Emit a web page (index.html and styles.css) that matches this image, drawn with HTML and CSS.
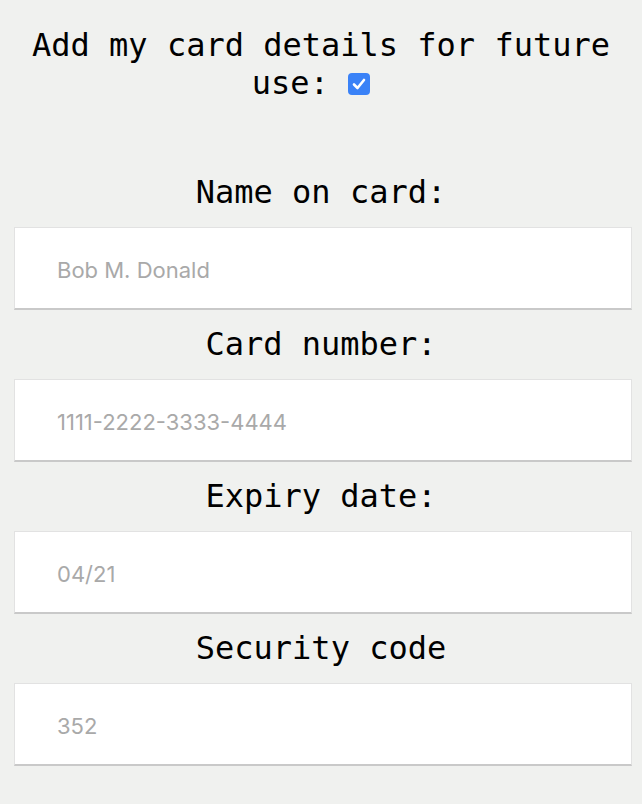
FILE: index.html
```html
<!DOCTYPE html>
<html>
<head>
<meta charset="utf-8">
<link rel="stylesheet" href="styles.css">
</head>
<body>
<form class="form">
  <div class="save">
    Add my card details for future use: <span class="check"><svg width="22" height="22" viewBox="0 0 22 22"><rect x="0" y="0" width="22" height="22" rx="4" fill="#3a82f7"/><path d="M6 11.5 L9.5 15 L16 7" fill="none" stroke="#fff" stroke-width="2.6" stroke-linecap="round" stroke-linejoin="round"/></svg></span>
  </div>
  <div class="field first">
    <label class="label">Name on card:</label>
    <input class="input" type="text" placeholder="Bob M. Donald">
  </div>
  <div class="field">
    <label class="label">Card number:</label>
    <input class="input" type="text" placeholder="1111-2222-3333-4444">
  </div>
  <div class="field">
    <label class="label">Expiry date:</label>
    <input class="input" type="text" placeholder="04/21">
  </div>
  <div class="field">
    <label class="label">Security code</label>
    <input class="input" type="text" placeholder="352">
  </div>
</form>
</body>
</html>
```
FILE: styles.css
```css
html, body {
  margin: 0;
  padding: 0;
  background: #f0f1ef;
}
body {
  font-family: "DejaVu Sans Mono", monospace;
  color: #000;
}
.form {
  display: flex;
  flex-direction: column;
  padding-top: 26px;
}
.save {
  font-size: 32px;
  line-height: 38px;
  text-align: center;
  padding: 0 20px;
}
.check {
  display: inline-block;
  width: 22px;
  height: 22px;
  vertical-align: -1px;
  margin-right: 20px;
}
.check svg {
  display: block;
}
.field {
  display: flex;
  flex-direction: column;
}
.field.first {
  margin-top: 56px;
}
.label {
  font-size: 32px;
  line-height: 37px;
  text-align: center;
  padding: 16px 0;
}
.input {
  box-sizing: border-box;
  width: 618px;
  height: 83px;
  margin: 0 0 0 14px;
  background: #fff;
  border: 1px solid #e2e2e2;
  border-bottom: 2px solid #c9c9c9;
  padding: 3px 0 0 42px;
  font-family: Inter, "Liberation Sans", sans-serif;
  font-size: 22px;
  color: #333;
  outline: none;
}
.input::placeholder {
  color: #a9a9a9;
}
```
